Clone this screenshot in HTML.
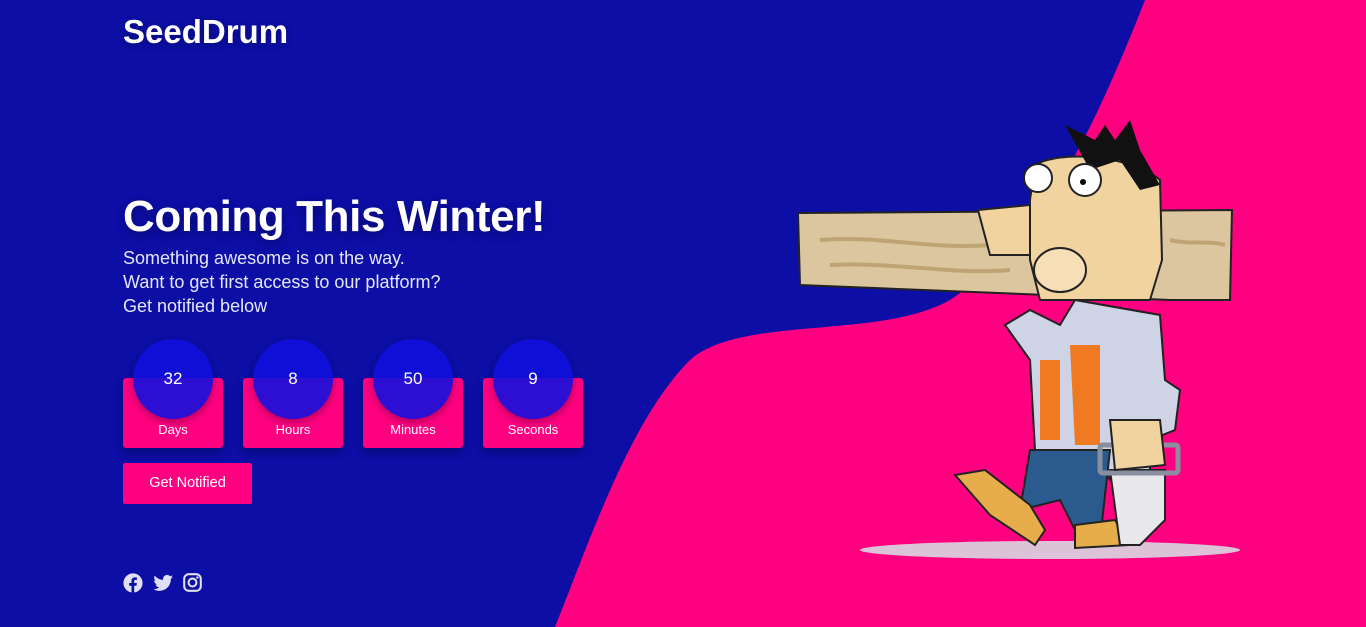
<!DOCTYPE html>
<html><head><meta charset="utf-8"><style>
html,body{margin:0;padding:0}
body{width:1366px;height:627px;overflow:hidden;background:#0c0ea6;position:relative;font-family:"Liberation Sans",sans-serif;color:#fff}
.bg{position:absolute;left:0;top:0}
.logo{position:absolute;left:123px;top:13px;font-size:33px;font-weight:bold;letter-spacing:0;text-shadow:0 2px 8px rgba(0,0,0,.3)}
h1{position:absolute;left:123px;top:192px;margin:0;font-size:44px;font-weight:bold;letter-spacing:-0.4px;text-shadow:0 3px 10px rgba(0,0,0,.35)}
.sub{position:absolute;left:123px;top:246px;font-size:18px;line-height:24px;color:#e6e6f6}
.box{position:absolute;top:378px;width:100px;height:70px;background:#ff0080;border-radius:3px;box-shadow:0 4px 10px rgba(0,0,0,.3)}
.box .c{position:absolute;left:10px;top:-39px;width:80px;height:80px;border-radius:50%;background:rgba(16,16,222,.88);box-shadow:0 3px 8px rgba(0,0,0,.3);text-align:center;line-height:80px;font-size:17px}
.box .l{position:absolute;left:0;right:0;top:44px;text-align:center;font-size:13px}
.btn{position:absolute;left:123px;top:463px;width:129px;height:41px;background:#ff0080;border-radius:2px;text-align:center;line-height:41px;font-size:14.5px}
.ic{position:absolute;top:573px}
</style></head><body>
<svg class="bg" width="1366" height="627">
<path d="M1145,0 L1366,0 L1366,627 L555,627 C590,540 630,420 690,360 C740,315 880,340 950,300 C1040,240 1090,140 1145,0 Z" fill="#ff0080"/>
<ellipse cx="1050" cy="550" rx="190" ry="9" fill="#d8d8e0" opacity=".9"/>
<path d="M1005,325 L1030,310 L1060,325 L1075,300 L1160,315 L1165,380 L1180,390 L1175,430 L1150,440 L1150,470 L1110,480 L1100,450 L1035,450 L1030,360 Z" fill="#cfd3e6" stroke="#222" stroke-width="2"/>
<path d="M1040,360 L1060,360 L1060,440 L1040,440 Z M1070,345 L1100,345 L1100,445 L1075,445 Z" fill="#f07a22"/>
<path d="M1030,450 L1110,450 L1100,540 L1080,540 L1060,500 L1020,510 Z" fill="#2b5a8e" stroke="#222" stroke-width="2"/>
<path d="M955,475 L985,470 L1030,505 L1045,530 L1035,545 L990,515 Z" fill="#e6ad4a" stroke="#222" stroke-width="2"/>
<path d="M1075,525 L1115,520 L1130,545 L1075,548 Z" fill="#e6ad4a" stroke="#222" stroke-width="2"/>
<path d="M1110,470 L1165,470 L1165,520 L1140,545 L1120,545 Z" fill="#e8e8ec" stroke="#222" stroke-width="2"/>
<rect x="1100" y="445" width="78" height="28" rx="3" fill="none" stroke="#8a8fa0" stroke-width="5"/>
<path d="M1110,420 L1160,420 L1165,465 L1115,470 Z" fill="#f1d39f" stroke="#222" stroke-width="2"/>
<path d="M798,213 L1232,210 L1230,300 L1170,300 L800,285 Z" fill="#dcc69f" stroke="#222" stroke-width="2"/>
<path d="M820,240 C880,235 930,250 990,245 M830,265 C900,262 950,275 1010,270 M1170,240 C1190,245 1210,240 1225,245" stroke="#bfa473" stroke-width="4" fill="none"/>
<path d="M1035,165 C1060,150 1130,155 1160,180 L1162,260 L1150,300 L1040,300 L1030,260 L1030,200 Z" fill="#f1d39f" stroke="#222" stroke-width="2"/>
<path d="M1065,125 L1095,140 L1105,125 L1115,140 L1130,120 L1140,150 L1160,185 L1140,190 L1120,160 L1090,170 Z" fill="#111"/>
<circle cx="1085" cy="180" r="16" fill="#fff" stroke="#222" stroke-width="2"/>
<circle cx="1038" cy="178" r="14" fill="#fff" stroke="#222" stroke-width="2"/>
<circle cx="1083" cy="182" r="3" fill="#000"/>
<ellipse cx="1060" cy="270" rx="26" ry="22" fill="#f6deb6" stroke="#222" stroke-width="2"/>
<path d="M978,210 L1030,205 L1030,255 L990,255 Z" fill="#f1d39f" stroke="#222" stroke-width="2"/>
</svg>
<div class="logo">SeedDrum</div>
<h1>Coming This Winter!</h1>
<div class="sub">Something awesome is on the way.<br>Want to get first access to our platform?<br>Get notified below</div>
<div class="box" style="left:123px"><div class="c">32</div><div class="l">Days</div></div>
<div class="box" style="left:243px"><div class="c">8</div><div class="l">Hours</div></div>
<div class="box" style="left:363px"><div class="c">50</div><div class="l">Minutes</div></div>
<div class="box" style="left:483px"><div class="c">9</div><div class="l">Seconds</div></div>
<div class="btn">Get Notified</div>
<svg class="ic" style="left:123px" width="20" height="20" viewBox="0 0 24 24"><circle cx="12" cy="12" r="11.5" fill="#dfe0f5"/><path d="M13.4,24 V15.3 H16.2 L16.6,12 H13.4 V9.9 C13.4,9 13.7,8.3 15,8.3 H16.7 V5.4 C16.4,5.3 15.4,5.2 14.3,5.2 C11.9,5.2 10.2,6.7 10.2,9.4 V12 H7.4 V15.3 H10.2 V24 Z" fill="#0c0ea6"/></svg>
<svg class="ic" style="left:153px" width="21" height="20" viewBox="0 0 24 24"><path d="M23.6,4.6 c-.9.4-1.8.6-2.8.8 1-.6 1.8-1.6 2.1-2.7-.9.6-2 1-3.1 1.2C18.9,2.9 17.6,2.3 16.3,2.3c-2.7,0-4.8,2.2-4.8,4.8 0,.4 0,.8.1,1.1C7.5,8 3.9,6.1 1.5,3.1c-.4.7-.7,1.6-.7,2.4 0,1.7.9,3.2 2.1,4-.8,0-1.5-.2-2.2-.6v.1c0,2.3 1.7,4.3 3.900,4.7-.4.1-.8.2-1.3.2-.3,0-.6,0-.9-.1.6,1.9 2.4,3.3 4.5,3.4-1.7,1.3-3.700,2.1-6,2.1-.4,0-.8,0-1.2-.1 2.1,1.4 4.7,2.2 7.4,2.2 8.9,0 13.7-7.4 13.7-13.7v-.6c.9-.7 1.8-1.5 2.4-2.5z" fill="#dfe0f5"/></svg>
<svg class="ic" style="left:183px" width="19" height="19" viewBox="0 0 24 24"><rect x="1.5" y="1.5" width="21" height="21" rx="6" fill="none" stroke="#dfe0f5" stroke-width="2.6"/><circle cx="12" cy="12" r="5" fill="none" stroke="#dfe0f5" stroke-width="2.6"/><circle cx="18.2" cy="5.8" r="1.5" fill="#dfe0f5"/></svg>
</body></html>
